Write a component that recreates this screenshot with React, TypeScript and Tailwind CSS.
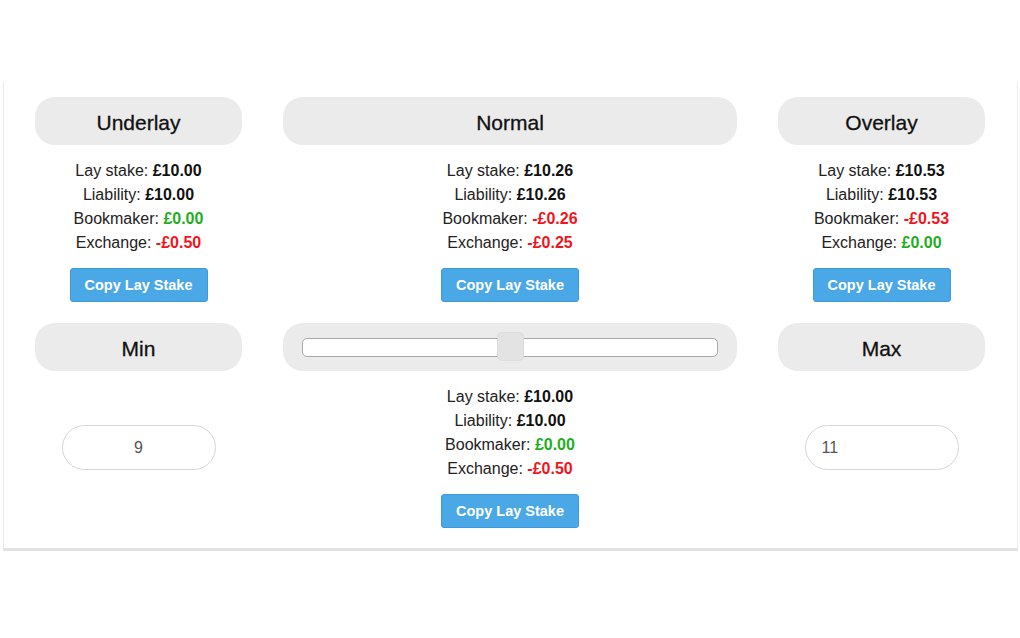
import React from 'react';

type Money = { text: string; tone: 'plain' | 'green' | 'red' };

type Result = {
    layStake: string;
    liability: string;
    bookmaker: Money;
    exchange: Money;
};

const underlay: Result = {
    layStake: '£10.00',
    liability: '£10.00',
    bookmaker: { text: '£0.00', tone: 'green' },
    exchange: { text: '-£0.50', tone: 'red' },
};

const normal: Result = {
    layStake: '£10.26',
    liability: '£10.26',
    bookmaker: { text: '-£0.26', tone: 'red' },
    exchange: { text: '-£0.25', tone: 'red' },
};

const overlay: Result = {
    layStake: '£10.53',
    liability: '£10.53',
    bookmaker: { text: '-£0.53', tone: 'red' },
    exchange: { text: '£0.00', tone: 'green' },
};

const custom: Result = {
    layStake: '£10.00',
    liability: '£10.00',
    bookmaker: { text: '£0.00', tone: 'green' },
    exchange: { text: '-£0.50', tone: 'red' },
};

function Pill({ children }: { children: React.ReactNode }) {
    return (
        <div className="h-[48px] w-full rounded-[20px] bg-[#ebebeb] flex items-center justify-center pt-[3px] text-[21px] text-[#111] [-webkit-text-stroke:0.3px_#111]">
            {children}
        </div>
    );
}

function Value({ money }: { money: Money }) {
    const color = money.tone === 'green' ? 'text-[#1fae1f]' : money.tone === 'red' ? 'text-[#f2141c]' : 'text-[#111]';
    return <b className={color}>{money.text}</b>;
}

function ResultBlock({ result }: { result: Result }) {
    return (
        <div className="flex flex-col items-center">
            <div className="mt-[14px] text-[16px] leading-[24px] text-[#222] text-center">
                <div>
                    Lay stake: <b className="text-[#111]">{result.layStake}</b>
                </div>
                <div>
                    Liability: <b className="text-[#111]">{result.liability}</b>
                </div>
                <div>
                    Bookmaker: <Value money={result.bookmaker} />
                </div>
                <div>
                    Exchange: <Value money={result.exchange} />
                </div>
            </div>
            <button className="mt-[13px] h-[34px] w-[138px] rounded-[3px] bg-[#4ba8e6] border border-[#3c9bdc] text-white font-bold text-[14.5px] pt-[1px]">
                Copy Lay Stake
            </button>
        </div>
    );
}

function NumberBox({ value, center }: { value: string; center?: boolean }) {
    return (
        <div
            className={`mt-[54px] h-[45px] w-[154px] rounded-full border border-[#d6d6d6] bg-white flex items-center text-[16px] text-[#555] ${center ? 'justify-center' : 'pl-[16px]'}`}
        >
            {value}
        </div>
    );
}

function Slider() {
    return (
        <div className="h-[48px] w-full rounded-[20px] bg-[#ebebeb] flex items-center px-[19px]">
            <div className="relative h-[19px] w-full rounded-[5px] border border-[#a9a9a9] bg-white">
                <div className="absolute left-[194px] top-[-7px] h-[29px] w-[27px] rounded-[5px] bg-[#e3e3e3] border border-[#dcdcdc]" />
            </div>
        </div>
    );
}

export default function App() {
    return (
        <div className="h-[638px] bg-white pt-[82px]" style={{ fontFamily: '"Liberation Sans", Arial, sans-serif' }}>
            <div className="ml-[3px] w-[1015px] border-x border-[#ececec] border-b-[3px] border-b-[#e2e2e2] pt-[15px] pb-[20px]">
                <div className="grid grid-cols-[207px_454px_207px] gap-x-[41px] ml-[31px]">
                    {/* Top row */}
                    <div className="flex flex-col items-center">
                        <Pill>Underlay</Pill>
                        <ResultBlock result={underlay} />
                    </div>
                    <div className="flex flex-col items-center">
                        <Pill>Normal</Pill>
                        <ResultBlock result={normal} />
                    </div>
                    <div className="flex flex-col items-center">
                        <Pill>Overlay</Pill>
                        <ResultBlock result={overlay} />
                    </div>

                    {/* Bottom row */}
                    <div className="mt-[21px] flex flex-col items-center">
                        <Pill>Min</Pill>
                        <NumberBox value="9" center />
                    </div>
                    <div className="mt-[21px] flex flex-col items-center">
                        <Slider />
                        <ResultBlock result={custom} />
                    </div>
                    <div className="mt-[21px] flex flex-col items-center">
                        <Pill>Max</Pill>
                        <NumberBox value="11" />
                    </div>
                </div>
            </div>
        </div>
    );
}
